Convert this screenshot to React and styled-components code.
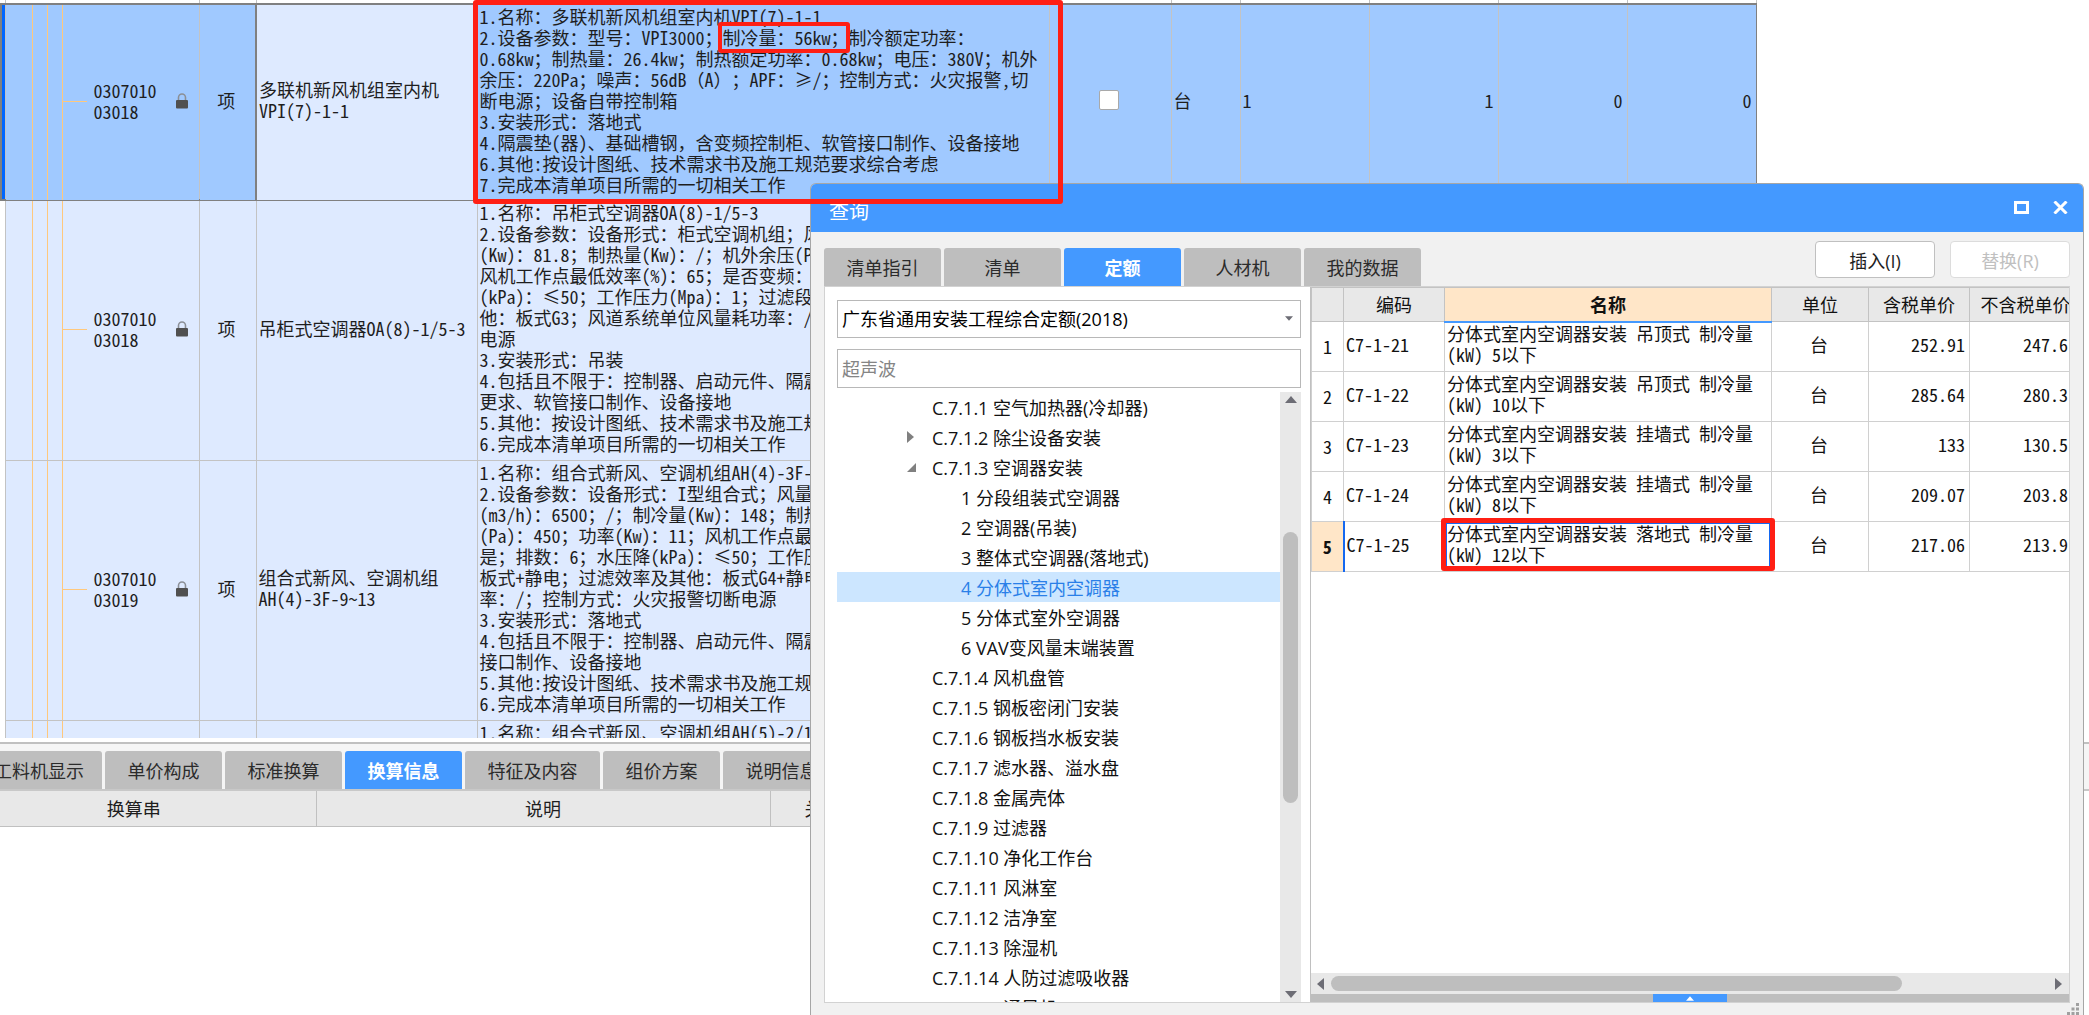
import React from "react";
import styled, { createGlobalStyle, css } from "styled-components";

const GlobalStyle = createGlobalStyle`
  * {
    box-sizing: border-box;
  }
  body {
    margin: 0;
    background-color: #ffffff;
    color: #1e1e1e;
    font-family: "Open Sans", "Noto Sans CJK SC", sans-serif;
    font-size: 18px;
    text-spacing-trim: space-all;
  }
  button, input, select {
    font: inherit;
    color: inherit;
  }
`;

const gridFont = css`
  font-family: "Noto Sans Mono CJK SC", "Noto Sans CJK SC", monospace;
  font-size: 18px;
  line-height: 21px;
`;

const Page = styled.div`
  position: relative;
  display: flex;
  flex-direction: column;
  height: 100vh;
  overflow: hidden;
`;

/* ---------- bill grid ---------- */

const BillPane = styled.main`
  flex: 1;
  min-height: 0;
  padding-left: 1px;
  border-bottom: 4px solid #ffffff;
  overflow: hidden;
`;

const BillTable = styled.table`
  ${gridFont};
  table-layout: fixed;
  width: 1755px;
  border-collapse: collapse;
`;

const BillCell = styled.td`
  position: relative;
  padding: 1px 4px 5px 2px;
  border: 1px solid #c3c3c3;
  background-color: ${props => (props.$active ? "#a0c9ff" : "#deeaff")};
  text-align: ${props => props.$align || "left"};
  vertical-align: middle;
  white-space: pre;
`;

const BillRow = styled.tr`
  height: ${props => props.$height}px;
  ${props =>
    props.$selected &&
    css`
      outline: 2px solid #808080;
      outline-offset: -1px;
    `};
`;

const TopStrip = styled.td`
  height: 4px;
  padding: 0;
  border: 1px solid #c3c3c3;
  border-top: none;
`;

const RowMarker = styled.td`
  padding: 0;
  background-color: ${props => (props.$on ? "#0066ff" : "#ffffff")};
`;

const CodeCell = styled(BillCell)`
  padding: 0 0 2px;
  background-image: linear-gradient(#ffc87c, #ffc87c),
    linear-gradient(#ffc87c, #ffc87c), linear-gradient(#ffc87c, #ffc87c);
  background-size: 1px 100%;
  background-position: 26px 0, 41px 0, 56px 0;
  background-repeat: no-repeat;
`;

const CodeLine = styled.div`
  display: flex;
  align-items: center;
  padding-left: 57px;
`;

const Branch = styled.span`
  width: 24px;
  height: 1px;
  margin-right: 7px;
  background-color: #ffc87c;
`;

const CodeText = styled.span`
  width: 82px;
`;

const NameCell = styled(BillCell)`
  background-color: #deeaff;
  border-left: ${props => (props.$active ? "2px solid #808080" : "1px solid #c3c3c3")};
`;

const FeatureCell = styled(BillCell)`
  vertical-align: top;
`;

const Line = styled.div`
  display: flex;
  height: 21px;
`;

const RedFrame = styled.span`
  position: absolute;
  inset: ${props => props.$inset};
  z-index: 5;
  border: ${props => props.$width || 5}px solid #ff1f14;
  border-radius: 3px;
  pointer-events: none;
`;

const Marked = styled.span`
  position: relative;
`;

const Tick = styled.input`
  appearance: none;
  display: block;
  width: 20px;
  height: 20px;
  margin: 0 auto;
  background-color: #ffffff;
  border: 1px solid #a9a9a9;
  border-radius: 2px;
`;

/* ---------- lower pane ---------- */

const DetailPane = styled.section`
  height: 273px;
  border-top: 2px solid #c0c0c0;
  background-color: #ffffff;
`;

const DetailTabs = styled.nav`
  display: flex;
  gap: 3px;
  height: 47px;
  margin-left: -24px;
  padding-top: 7px;
  background-color: #f5f5f5;
  border-bottom: 2px solid #c8c8c8;
`;

const Tab = styled.button`
  flex: none;
  width: ${props => props.$width || 117}px;
  height: 38px;
  padding: 0;
  border: none;
  border-radius: 3px 3px 0 0;
  background-color: ${props => (props.$active ? "#4499ff" : "#bebebe")};
  color: ${props => (props.$active ? "#ffffff" : "#2b2b2b")};
  font-weight: ${props => (props.$active ? 700 : 400)};
  white-space: nowrap;
`;

const DetailTable = styled.table`
  table-layout: fixed;
  width: 1200px;
  margin-left: -48px;
  border-collapse: collapse;
  th {
    height: 35px;
    padding: 0 0 1px;
    font-weight: 400;
    background-color: #e8e8e8;
    border-right: 1px solid #c0c0c0;
    border-bottom: 1px solid #c0c0c0;
  }
  th:last-child {
    padding-left: 34px;
    text-align: left;
  }
`;

/* ---------- query dialog ---------- */

const Dialog = styled.section`
  position: absolute;
  top: 183px;
  right: 5px;
  bottom: 0;
  left: 810px;
  z-index: 2;
  display: flex;
  flex-direction: column;
  background-color: #f1f1f1;
  border: 1px solid #a6a6a6;
  border-bottom: none;
  border-radius: 6px 6px 0 0;
`;

const TitleBar = styled.header`
  display: flex;
  align-items: center;
  gap: 24px;
  height: 48px;
  padding: 4px 15px 0 18px;
  background-color: #4499ff;
  border-radius: 5px 5px 0 0;
  color: #ffffff;
`;

const Title = styled.h1`
  flex: 1;
  margin: 0;
  font-size: 20px;
  font-weight: 400;
`;

const TitleButton = styled.button`
  display: flex;
  padding: 0;
  margin-bottom: 6px;
  border: none;
  background: none;
`;

const Toolbar = styled.div`
  display: flex;
  align-items: flex-end;
  gap: 3px;
  height: 54px;
  padding: 0 13px;
`;

const Actions = styled.div`
  display: flex;
  gap: 15px;
  margin-left: auto;
  padding-bottom: 8px;
`;

const ActionButton = styled.button`
  width: 120px;
  height: 37px;
  padding: 0;
  background-color: #ffffff;
  border: 1px solid #c0c0c0;
  border-radius: 4px;
  &:disabled {
    color: #c0c0c0;
    border-color: #dcdcdc;
  }
`;

const Body = styled.div`
  flex: 1;
  display: flex;
  min-height: 0;
  margin: 0 13px;
  border: 1px solid #d2d2d2;
`;

const Side = styled.div`
  flex: none;
  display: flex;
  flex-direction: column;
  width: 485px;
  padding: 13px 9px 0 12px;
  background-color: #ffffff;
`;

const Picker = styled.div`
  position: relative;
  margin-bottom: 11px;
  select {
    appearance: none;
    display: block;
    width: 100%;
    height: 38px;
    padding: 0 4px;
    background-color: #ffffff;
    border: 1px solid #b8b8b8;
    border-radius: 0;
    color: #000000;
  }
  svg {
    position: absolute;
    top: 16px;
    right: 8px;
  }
`;

const Search = styled.input`
  width: 100%;
  height: 39px;
  flex: none;
  padding: 0 4px;
  border: 1px solid #b8b8b8;
  border-radius: 0;
  &::placeholder {
    color: #858585;
    opacity: 1;
  }
`;

const TreeBox = styled.div`
  flex: 1;
  display: flex;
  min-height: 0;
  margin-top: 4px;
`;

const Tree = styled.ul`
  flex: 1;
  margin: 0;
  padding: 0;
  overflow: hidden;
  list-style: none;
`;

const TreeItem = styled.li`
  display: flex;
  align-items: center;
  height: 30px;
  padding-left: ${props => (props.$child ? 124 : 70)}px;
  background-color: ${props => (props.$active ? "#cce6ff" : "transparent")};
  color: ${props => (props.$active ? "#2a7fe8" : "#111111")};
  white-space: nowrap;
`;

const Toggle = styled.span`
  display: ${props => (props.$child ? "none" : "flex")};
  width: 25px;
`;

const VScroll = styled.div`
  display: flex;
  flex-direction: column;
  align-items: center;
  width: 21px;
  padding: 4px 0;
  background-color: #e8e8e8;
`;

const HScroll = styled.div`
  display: flex;
  align-items: center;
  height: 21px;
  padding: 0 7px 0 6px;
  background-color: #e8e8e8;
`;

const Space = styled.div`
  flex: ${props => props.$grow};
`;

const Thumb = styled.div`
  flex: ${props => props.$grow};
  ${props => (props.$wide ? "height: 15px" : "width: 15px")};
  border-radius: 8px;
  background-color: #bebebe;
`;

const Result = styled.div`
  flex: 1;
  display: flex;
  flex-direction: column;
  min-width: 0;
  background-color: #ffffff;
  border-left: 1px solid #c0c0c0;
`;

const ResultScroll = styled.div`
  flex: 1;
  overflow: hidden;
`;

const ResultTable = styled.table`
  ${gridFont};
  table-layout: fixed;
  width: 770px;
  border-collapse: collapse;
  color: #111111;
`;

const HeadCell = styled.th`
  height: 34px;
  padding: 0;
  background-color: ${props => (props.$active ? "#ffe6c8" : "#e8e8e8")};
  border: 1px solid #c3c3c3;
  border-bottom: ${props => (props.$active ? "2px solid #4499ff" : "1px solid #c3c3c3")};
  font-weight: ${props => (props.$active ? 700 : 400)};
`;

const Cell = styled.td`
  position: relative;
  height: 50px;
  padding: 0 ${props => props.$right || 4}px 5px 2px;
  border: 1px solid #d0d0d0;
  text-align: ${props => props.$align || "left"};
  white-space: pre;
`;

const IndexCell = styled(Cell)`
  padding: 0;
  text-align: center;
  ${props =>
    props.$active &&
    css`
      background-color: #ffe6c8;
      border-right: 2px solid #1468f0;
      font-weight: 700;
    `};
`;

const SelectedBox = styled.span`
  position: absolute;
  inset: 0;
  border: 2px solid #1468f0;
`;

const Splitter = styled.div`
  display: flex;
  justify-content: center;
  height: 8px;
  background-color: #bebebe;
`;

const SplitHandle = styled.button`
  display: flex;
  align-items: center;
  justify-content: center;
  width: 74px;
  height: 8px;
  padding: 0;
  border: none;
  background-color: #4499ff;
`;

const Footer = styled.footer`
  display: flex;
  justify-content: flex-end;
  height: 12px;
  padding-right: 4px;
`;

const Lock = () => (
  <svg width="12" height="16" viewBox="0 0 12 16">
    <path d="M2.5 7V4.5a3.5 3.5 0 0 1 7 0V7" fill="none" stroke="#8b8f96" strokeWidth="1.6" />
    <rect x="0" y="7" width="12" height="8.5" rx="1" fill="#505050" />
  </svg>
);

const shapes = {
  up: "0,7 6,0 12,7",
  down: "0,0 12,0 6,7",
  left: "7,0 7,12 0,6",
  right: "0,0 7,6 0,12",
  open: "9,0 9,9 0,9"
};

const Arrow = ({ dir, width = 12, height = 7, color = "#6d6d75", box = "0 0 12 7" }) => (
  <svg width={width} height={height} viewBox={box}>
    <polygon points={shapes[dir]} fill={color} />
  </svg>
);

// a line given as an array has its middle part framed in red
const billRows = [
  {
    height: 195,
    selected: true,
    code: "0307010\n03018",
    name: "多联机新风机组室内机\nVPI(7)-1-1",
    lines: [
      "1.名称：多联机新风机组室内机VPI(7)-1-1",
      ["2.设备参数：型号：VPI3000；", "制冷量：56kw；", "制冷额定功率："],
      "0.68kw；制热量：26.4kw；制热额定功率：0.68kw；电压：380V；机外",
      "余压：220Pa；噪声：56dB（A）；APF：≥/；控制方式：火灾报警,切",
      "断电源；设备自带控制箱",
      "3.安装形式：落地式",
      "4.隔震垫(器)、基础槽钢，含变频控制柜、软管接口制作、设备接地",
      "6.其他:按设计图纸、技术需求书及施工规范要求综合考虑",
      "7.完成本清单项目所需的一切相关工作"
    ],
    unit: "台",
    values: ["1", "1", "0", "0"]
  },
  {
    height: 260,
    code: "0307010\n03018",
    name: "吊柜式空调器OA(8)-1/5-3",
    lines: [
      "1.名称：吊柜式空调器OA(8)-1/5-3",
      "2.设备参数：设备形式：柜式空调机组；风",
      "(Kw)：81.8；制热量(Kw)：/；机外余压(Pa",
      "风机工作点最低效率(%)：65；是否变频：",
      "(kPa)：≤50；工作压力(Mpa)：1；过滤段",
      "他：板式G3；风道系统单位风量耗功率：/",
      "电源",
      "3.安装形式：吊装",
      "4.包括且不限于：控制器、启动元件、隔震",
      "更求、软管接口制作、设备接地",
      "5.其他：按设计图纸、技术需求书及施工规",
      "6.完成本清单项目所需的一切相关工作"
    ]
  },
  {
    height: 260,
    code: "0307010\n03019",
    name: "组合式新风、空调机组\nAH(4)-3F-9~13",
    lines: [
      "1.名称：组合式新风、空调机组AH(4)-3F-9",
      "2.设备参数：设备形式：I型组合式；风量",
      "(m3/h)：6500；/；制冷量(Kw)：148；制热",
      "(Pa)：450；功率(Kw)：11；风机工作点最",
      "是；排数：6；水压降(kPa)：≤50；工作压",
      "板式+静电；过滤效率及其他：板式G4+静电",
      "率：/；控制方式：火灾报警切断电源",
      "3.安装形式：落地式",
      "4.包括且不限于：控制器、启动元件、隔震",
      "接口制作、设备接地",
      "5.其他:按设计图纸、技术需求书及施工规",
      "6.完成本清单项目所需的一切相关工作"
    ]
  },
  {
    height: 60,
    blank: true,
    lines: ["1.名称：组合式新风、空调机组AH(5)-2/1"]
  }
];

const billColumns = [4, 194, 57, 221, 572, 122, 69, 129, 129, 129, 129];

const detailTabs = [
  { label: "工料机显示", width: 126 },
  { label: "单价构成" },
  { label: "标准换算" },
  { label: "换算信息", active: true },
  { label: "特征及内容", width: 135 },
  { label: "组价方案" },
  { label: "说明信息" }
];

const treeItems = [
  { label: "C.7.1.1 空气加热器(冷却器)" },
  { label: "C.7.1.2 除尘设备安装", toggle: "right" },
  { label: "C.7.1.3 空调器安装", toggle: "open" },
  { label: "1 分段组装式空调器", child: true },
  { label: "2 空调器(吊装)", child: true },
  { label: "3 整体式空调器(落地式)", child: true },
  { label: "4 分体式室内空调器", child: true, active: true },
  { label: "5 分体式室外空调器", child: true },
  { label: "6 VAV变风量末端装置", child: true },
  { label: "C.7.1.4 风机盘管" },
  { label: "C.7.1.5 钢板密闭门安装" },
  { label: "C.7.1.6 钢板挡水板安装" },
  { label: "C.7.1.7 滤水器、溢水盘" },
  { label: "C.7.1.8 金属壳体" },
  { label: "C.7.1.9 过滤器" },
  { label: "C.7.1.10 净化工作台" },
  { label: "C.7.1.11 风淋室" },
  { label: "C.7.1.12 洁净室" },
  { label: "C.7.1.13 除湿机" },
  { label: "C.7.1.14 人防过滤吸收器" },
  { label: "C.7.1.15 通风机" }
];

const quotas = [
  { code: "C7-1-21", name: "分体式室内空调器安装 吊顶式 制冷量\n(kW) 5以下", price: "252.91", net: "247.6" },
  { code: "C7-1-22", name: "分体式室内空调器安装 吊顶式 制冷量\n(kW) 10以下", price: "285.64", net: "280.3" },
  { code: "C7-1-23", name: "分体式室内空调器安装 挂墙式 制冷量\n(kW) 3以下", price: "133", net: "130.5" },
  { code: "C7-1-24", name: "分体式室内空调器安装 挂墙式 制冷量\n(kW) 8以下", price: "209.07", net: "203.8" },
  { code: "C7-1-25", name: "分体式室内空调器安装 落地式 制冷量\n(kW) 12以下", price: "217.06", net: "213.9", active: true }
];

const quotaColumns = [32, 101, 327, 97, 101, 112];

const FeatureLine = ({ line }) => {
  if (!Array.isArray(line)) {
    return <Line>{line}</Line>;
  }
  return (
    <Line>
      <span>{line[0]}</span>
      <Marked>
        {line[1]}
        <RedFrame $inset="-5px -1px -5px -5px" $width={4} />
      </Marked>
      <span>{line[2]}</span>
    </Line>
  );
};

const BillGrid = () => (
  <BillPane>
    <BillTable>
      <colgroup>
        {billColumns.map((width, i) => (
          <col key={i} style={{ width }} />
        ))}
      </colgroup>
      <tbody>
        <tr>
          <RowMarker />
          {billColumns.slice(1).map((width, i) => (
            <TopStrip key={i} />
          ))}
        </tr>
        {billRows.map((row, i) => {
          const values = row.values || ["", "", "", ""];
          return (
            <BillRow key={i} $height={row.height} $selected={row.selected}>
              <RowMarker $on={row.selected} />
              <CodeCell $active={row.selected}>
                {!row.blank && (
                  <CodeLine>
                    <Branch />
                    <CodeText>{row.code}</CodeText>
                    <Lock />
                  </CodeLine>
                )}
              </CodeCell>
              <BillCell $active={row.selected} $align="center">
                {!row.blank && "项"}
              </BillCell>
              <NameCell $active={row.selected}>{row.name}</NameCell>
              <FeatureCell $active={row.selected}>
                {row.lines.map((line, k) => (
                  <FeatureLine key={k} line={line} />
                ))}
                {row.selected && <RedFrame $inset="-5px -14px -4px -5px" />}
              </FeatureCell>
              <BillCell $active={row.selected}>
                {row.selected && <Tick type="checkbox" aria-label="主要清单" />}
              </BillCell>
              <BillCell $active={row.selected}>{row.unit}</BillCell>
              <BillCell $active={row.selected}>{values[0]}</BillCell>
              {values.slice(1).map((value, k) => (
                <BillCell key={k} $active={row.selected} $align="right">
                  {value}
                </BillCell>
              ))}
            </BillRow>
          );
        })}
      </tbody>
    </BillTable>
  </BillPane>
);

const Details = () => (
  <DetailPane>
    <DetailTabs>
      {detailTabs.map(tab => (
        <Tab key={tab.label} $width={tab.width} $active={tab.active}>
          {tab.label}
        </Tab>
      ))}
    </DetailTabs>
    <DetailTable>
      <colgroup>
        <col style={{ width: 364 }} />
        <col style={{ width: 454 }} />
        <col />
      </colgroup>
      <thead>
        <tr>
          <th>换算串</th>
          <th>说明</th>
          <th>关联</th>
        </tr>
      </thead>
    </DetailTable>
  </DetailPane>
);

const QueryTree = () => (
  <Side>
    <Picker>
      <select aria-label="定额库" defaultValue="2018">
        <option value="2018">广东省通用安装工程综合定额(2018)</option>
      </select>
      <Arrow dir="down" width={8} height={5} />
    </Picker>
    <Search type="text" aria-label="查找" placeholder="超声波" />
    <TreeBox>
      <Tree role="tree">
        {treeItems.map(item => (
          <TreeItem key={item.label} role="treeitem" $child={item.child} $active={item.active}>
            <Toggle $child={item.child}>
              {item.toggle === "right" && <Arrow dir="right" width={7} height={12} box="0 0 7 12" color="#808080" />}
              {item.toggle === "open" && <Arrow dir="open" width={9} height={9} box="0 0 9 9" color="#808080" />}
            </Toggle>
            {item.label}
          </TreeItem>
        ))}
      </Tree>
      <VScroll>
        <Arrow dir="up" />
        <Space $grow={22} />
        <Thumb $grow={46} />
        <Space $grow={32} />
        <Arrow dir="down" />
      </VScroll>
    </TreeBox>
  </Side>
);

const QuotaGrid = () => (
  <Result>
    <ResultScroll>
      <ResultTable>
        <colgroup>
          {quotaColumns.map((width, i) => (
            <col key={i} style={{ width }} />
          ))}
        </colgroup>
        <thead>
          <tr>
            <HeadCell />
            <HeadCell>编码</HeadCell>
            <HeadCell $active>名称</HeadCell>
            <HeadCell>单位</HeadCell>
            <HeadCell>含税单价</HeadCell>
            <HeadCell>不含税单价</HeadCell>
          </tr>
        </thead>
        <tbody>
          {quotas.map((quota, i) => (
            <tr key={quota.code}>
              <IndexCell $active={quota.active}>{i + 1}</IndexCell>
              <Cell>{quota.code}</Cell>
              <Cell>
                {quota.name}
                {quota.active && <SelectedBox />}
                {quota.active && <RedFrame $inset="-4px -4px 0 -4px" />}
              </Cell>
              <Cell $align="center">台</Cell>
              <Cell $align="right">{quota.price}</Cell>
              <Cell $align="right" $right={13}>
                {quota.net}
              </Cell>
            </tr>
          ))}
        </tbody>
      </ResultTable>
    </ResultScroll>
    <HScroll>
      <Arrow dir="left" width={7} height={12} box="0 0 7 12" />
      <Space $grow={1} />
      <Thumb $wide $grow={78} />
      <Space $grow={21} />
      <Arrow dir="right" width={7} height={12} box="0 0 7 12" />
    </HScroll>
    <Splitter>
      <SplitHandle aria-label="展开">
        <Arrow dir="up" width={8} height={5} color="#ffffff" />
      </SplitHandle>
    </Splitter>
  </Result>
);

const QueryDialog = () => (
  <Dialog role="dialog" aria-label="查询">
    <TitleBar>
      <Title>查询</Title>
      <TitleButton aria-label="最大化">
        <svg width="15" height="13" viewBox="0 0 15 13">
          <rect x="1.5" y="1.5" width="12" height="10" fill="none" stroke="#ffffff" strokeWidth="3" />
        </svg>
      </TitleButton>
      <TitleButton aria-label="关闭">
        <svg width="15" height="13" viewBox="0 0 15 13">
          <path d="M1.5 0.5L13.5 12.5M13.5 0.5L1.5 12.5" stroke="#ffffff" strokeWidth="3" />
        </svg>
      </TitleButton>
    </TitleBar>
    <Toolbar>
      <Tab>清单指引</Tab>
      <Tab>清单</Tab>
      <Tab $active>定额</Tab>
      <Tab>人材机</Tab>
      <Tab>我的数据</Tab>
      <Actions>
        <ActionButton>插入(I)</ActionButton>
        <ActionButton disabled>替换(R)</ActionButton>
      </Actions>
    </Toolbar>
    <Body>
      <QueryTree />
      <QuotaGrid />
    </Body>
    <Footer>
      <svg width="12" height="12" viewBox="0 0 12 12" fill="#a0a0a0">
        <rect x="9" y="0" width="3" height="3" />
        <rect x="4.5" y="4.5" width="3" height="3" />
        <rect x="9" y="4.5" width="3" height="3" />
        <rect x="0" y="9" width="3" height="3" />
        <rect x="4.5" y="9" width="3" height="3" />
        <rect x="9" y="9" width="3" height="3" />
      </svg>
    </Footer>
  </Dialog>
);

const App = () => (
  <>
    <GlobalStyle />
    <Page>
      <BillGrid />
      <Details />
      <QueryDialog />
    </Page>
  </>
);

export default App;
